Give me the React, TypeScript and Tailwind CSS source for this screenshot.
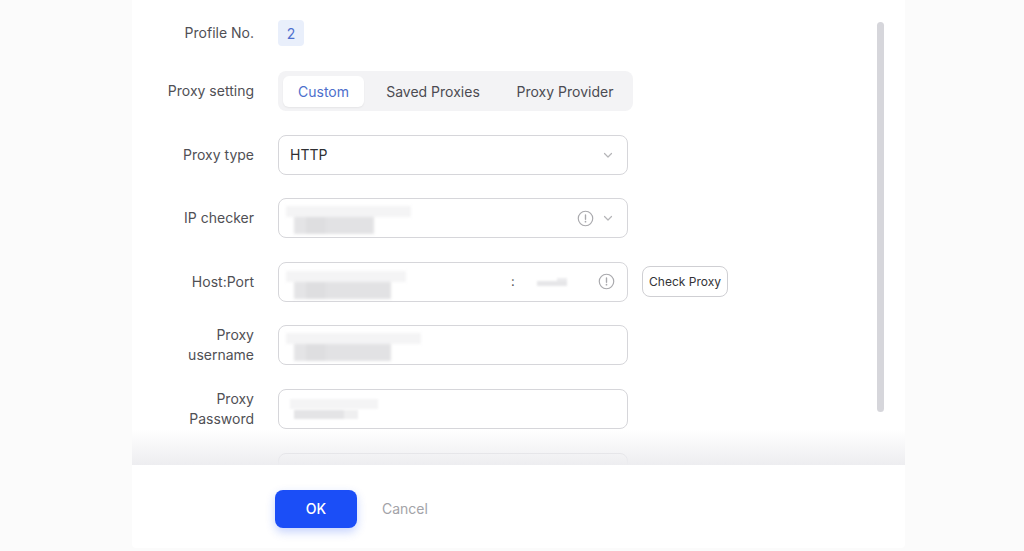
import React from "react";

const font = { fontFamily: "Inter, 'Noto Sans', sans-serif" };

function Chevron() {
  return (
    <svg width="12" height="12" viewBox="0 0 12 12" className="text-[#b5b5b8]">
      <path d="M2.5 4.5 6 8l3.5-3.5" fill="none" stroke="currentColor" strokeWidth="1.2" strokeLinecap="round" strokeLinejoin="round" />
    </svg>
  );
}

function Info() {
  return (
    <svg width="17" height="17" viewBox="0 0 16 16" className="text-[#a9a9ad]">
      <circle cx="8" cy="8" r="6.8" fill="none" stroke="currentColor" strokeWidth="1.1" />
      <path d="M8 4.6v4.2" stroke="currentColor" strokeWidth="1.3" strokeLinecap="round" />
      <circle cx="8" cy="11" r="0.8" fill="currentColor" />
    </svg>
  );
}

function Blur({ bandW, blockW }: { bandW: number; blockW: number }) {
  return (
    <div className="flex flex-col blur-[1.5px]">
      <div className="h-[11px] bg-[#f4f4f5]" style={{ width: bandW }} />
      <div className="ml-[8px] h-[17px] flex" style={{ width: blockW }}>
        <div className="h-full w-[12px] bg-[#e4e4e6]" />
        <div className="h-full w-[20px] bg-[#dedee0]" />
        <div className="h-full flex-1 bg-[#e2e2e4]" />
      </div>
    </div>
  );
}

function Row({ label, children }: { label: React.ReactNode; children: React.ReactNode }) {
  return (
    <div className="flex items-center">
      <div className="w-[122px] shrink-0 text-right text-[14px] leading-[20px] text-[#505055]">{label}</div>
      <div className="ml-[24px] flex items-center">{children}</div>
    </div>
  );
}

const box = "h-[40px] w-[350px] rounded-[8px] border border-[#d6d6da] bg-white flex items-center";

export default function App() {
  return (
    <div className="w-[1024px] h-[551px] bg-[#fbfbfb] flex overflow-hidden" style={font}>
      <div className="ml-[132px] w-[773px] h-[548px] bg-white flex flex-col rounded-b-[4px]">
        <div className="relative h-[465px] overflow-hidden">
          <div className="flex flex-col pt-[20px]">
            <Row label="Profile No.">
              <div className="h-[26px] w-[26px] rounded-[4px] bg-[#e9effb] text-[#4f6fcf] text-[14px] flex items-center justify-center">2</div>
            </Row>
            <div className="mt-[25px] flex flex-col gap-[23.6px]">
              <Row label="Proxy setting">
                <div className="h-[40px] w-[355px] rounded-[8px] bg-[#f3f3f5] flex items-center px-[5px] text-[14px] text-[#4b4b52]">
                  <div className="h-[31px] w-[81px] rounded-[6px] bg-white shadow-[0_1px_2px_rgba(0,0,0,0.06)] text-[#4d6fcc] flex items-center justify-center">Custom</div>
                  <div className="w-[138px] text-center">Saved Proxies</div>
                  <div className="w-[126px] text-center">Proxy Provider</div>
                </div>
              </Row>
              <Row label="Proxy type">
                <div className={`${box} pl-[11px] pr-[13px] justify-between`}>
                  <span className="text-[14px] text-[#2f2f33]">HTTP</span>
                  <Chevron />
                </div>
              </Row>
              <Row label="IP checker">
                <div className={`${box} pl-[7px] pr-[13px] justify-between`}>
                  <div className="mt-[4px]"><Blur bandW={125} blockW={80} /></div>
                  <div className="flex items-center gap-[8px]">
                    <Info />
                    <Chevron />
                  </div>
                </div>
              </Row>
              <Row label="Host:Port">
                <div className="flex items-center">
                  <div className={`${box} w-[349px] pl-[7px] pr-[12px]`}>
                    <div className="mt-[6px]"><Blur bandW={120} blockW={97} /></div>
                    <span className="ml-[105px] text-[13px] text-[#555]">:</span>
                    <div className="ml-[22px] flex flex-col items-end blur-[1px]">
                      <div className="h-[3px] w-[10px] bg-[#ececee]" />
                      <div className="h-[5px] w-[30px] bg-[#e6e6e8]" />
                    </div>
                    <div className="ml-auto"><Info /></div>
                  </div>
                  <button className="ml-[14px] h-[31px] w-[86px] rounded-[8px] border border-[#cfcfd3] bg-white text-[12px] text-[#333337]">Check Proxy</button>
                </div>
              </Row>
              <Row label={<>Proxy<br />username</>}>
                <div className={`${box} pl-[7px]`}>
                  <div className="mt-[4px]"><Blur bandW={135} blockW={97} /></div>
                </div>
              </Row>
              <Row label={<>Proxy<br />Password</>}>
                <div className={`${box} pl-[11px]`}>
                  <div className="flex flex-col blur-[1.2px]">
                    <div className="h-[10px] w-[88px] bg-[#f4f4f5]" />
                    <div className="mt-[1px] ml-[4px] h-[9px] w-[64px] flex">
                      <div className="h-full w-[50px] bg-[#e4e4e6]" />
                      <div className="h-full flex-1 bg-[#efeff0]" />
                    </div>
                  </div>
                </div>
              </Row>
              <Row label="">
                <div className={box} />
              </Row>
            </div>
          </div>
          <div className="absolute left-[745px] top-[22px] h-[390px] w-[7px] rounded-full bg-[#d6d6db]" />
          <div className="absolute left-0 right-0 bottom-0 h-[36px] bg-gradient-to-b from-[rgba(255,255,255,0)] to-[#ededf0]" />
        </div>
        <div className="flex-1 flex items-center pl-[143px] pt-[4px]">
          <button className="h-[38px] w-[82px] rounded-[8px] bg-[#1b4ef7] text-white text-[14px] font-medium shadow-[0_4px_10px_rgba(27,78,247,0.25)]">OK</button>
          <span className="ml-[25px] text-[14px] text-[#a3a3a8]">Cancel</span>
        </div>
      </div>
    </div>
  );
}
